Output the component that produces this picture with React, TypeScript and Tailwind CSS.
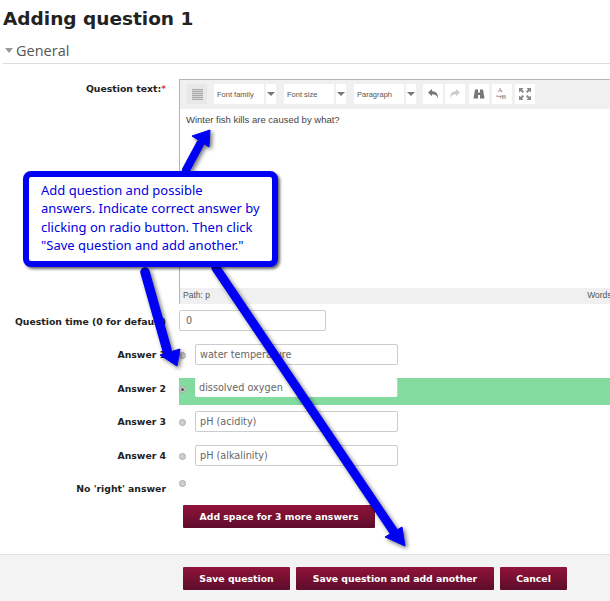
const V = '"DejaVu Sans", Verdana, sans-serif';

function Caret() {
  return <span className="w-0 h-0 border-l-[4px] border-r-[4px] border-t-[4px] border-l-transparent border-r-transparent border-t-[#777]" />;
}

function Select({ label, first = false }: { label: string; first?: boolean }) {
  return (
    <div className={`flex gap-[2px] h-[20px] ${first ? "" : "ml-[8px]"}`}>
      <div className="w-[50px] bg-white pl-[3px] text-[7.5px] leading-[21px] text-[#555] font-['Liberation_Sans',sans-serif]">{label}</div>
      <div className="w-[10px] bg-white flex items-center justify-center"><Caret /></div>
    </div>
  );
}

function ToolBtn({ children, className = "" }: { children: React.ReactNode; className?: string }) {
  return <div className={`w-[20px] h-[20px] bg-white flex items-center justify-center ${className}`}>{children}</div>;
}

function Radio({ checked = false }: { checked?: boolean }) {
  return (
    <span className="block w-[7px] h-[7px] rounded-full bg-[#d0d0d0] border border-[#aaa]">
      {checked && <span className="block m-[1px] w-[3px] h-[3px] rounded-full bg-[#555]" />}
    </span>
  );
}

function Label({ children, req }: { children: React.ReactNode; req?: boolean }) {
  return (
    <div className="w-[166px] shrink-0 text-right font-bold text-[9.3px] text-[#222] whitespace-nowrap" style={{ fontFamily: V }}>
      {children}
      {req && <span className="text-[#e53e3e]">*</span>}
    </div>
  );
}

function Answer({ label, value, className = "", checked, inputClass = "h-[21px] border border-[#ccc]" }: { label: string; value: string; className?: string; checked?: boolean; inputClass?: string }) {
  return (
    <div className="flex items-start">
      <div className="pt-[4px]"><Label>{label}</Label></div>
      <div className={`ml-[13px] flex-1 flex items-start ${className}`}>
        <div className="w-[16px] pt-[8px]"><Radio checked={checked} /></div>
        <div className={`w-[203px] rounded-[2px] bg-white pl-[4px] text-[9.7px] leading-[20px] text-[#666] ${inputClass}`} style={{ fontFamily: V }}>{value}</div>
      </div>
    </div>
  );
}

function Btn({ children, w }: { children: React.ReactNode; w: string }) {
  return (
    <div className={`${w} h-[23px] flex items-center justify-center rounded-[1px] bg-gradient-to-b from-[#911339] to-[#5e0c2b] text-white font-bold text-[9.3px] whitespace-nowrap`} style={{ fontFamily: V }}>
      {children}
    </div>
  );
}

export default function App() {
  return (
    <div className="relative w-[610px] h-[601px] overflow-hidden bg-white">
      <h2 className="pl-[3px] pt-[7px] text-[18.5px] leading-[24px] font-bold text-[#222]" style={{ fontFamily: V }}>Adding question 1</h2>

      <div className="mt-[10px] ml-[3px] h-[23px] border-b border-[#ddd] flex items-start">
        <span className="mt-[7px] ml-[2px] w-0 h-0 border-l-[4px] border-r-[4px] border-t-[5px] border-l-transparent border-r-transparent border-t-[#999]" />
        <span className="ml-[3px] mt-[1px] text-[14.500px] leading-[18px] text-[#555] font-['Open_Sans',sans-serif]">General</span>
      </div>

      <div className="mt-[15px] flex items-start">
        <div className="pt-[3px]"><Label req>Question text:</Label></div>
        <div className="ml-[13px] w-[445px] h-[225px] shrink-0 flex flex-col border-l border-t border-[#b5b5b5]">
          <div className="h-[29px] bg-[#f0f0f0] flex items-start pt-[4px] pl-[7px]">
            <div className="w-[20px] h-[20px] flex items-center justify-center bg-[#e8e8e8] mr-[7px]">
              <span className="w-[11px] h-[11px] bg-[repeating-linear-gradient(0deg,#aaa_0,#aaa_1px,#d5d5d5_1px,#d5d5d5_2px)]" />
            </div>
            <Select first label="Font family" />
            <Select label="Font size" />
            <Select label="Paragraph" />
            <ToolBtn className="ml-[7px]">
              <svg width="12" height="12" viewBox="0 0 12 12"><path d="M1 4.500 5 1v2.200c4 0 6 2.400 6 7.300-1-3-2.600-4.200-6-4.200V8.200z" fill="#777" /></svg>
            </ToolBtn>
            <ToolBtn className="ml-[2px]">
              <svg width="12" height="12" viewBox="0 0 12 12"><path d="M11 4.500 7 1v2.200c-4 0-6 2.400-6 7.300 1-3 2.600-4.200 6-4.200v1.900z" fill="#ccc" /></svg>
            </ToolBtn>
            <ToolBtn className="ml-[4px]">
              <svg width="12" height="12" viewBox="0 0 12 12"><path d="M2 1.500h3v3h2v-3h3l1.500 9H7V7H5v3.500H.5z" fill="#777" /></svg>
            </ToolBtn>
            <ToolBtn className="ml-[3px]">
              <div className="flex flex-col items-start w-[13px] text-[7px] leading-[7px] text-[#777] font-['Liberation_Serif',serif]">
                <span className="pl-[2px]">A</span>
                <span>↪B</span>
              </div>
            </ToolBtn>
            <ToolBtn className="ml-[3px]">
              <svg width="12" height="12" viewBox="0 0 12 12" fill="#888"><path d="M0 0h4.500L3 1.500 5 3.500 3.500 5 1.500 3 0 4.500zM12 0v4.500L10.500 3 8.500 5 7 3.500 9 1.500 7.500 0zM0 12V7.500L1.500 9 3.500 7 5 8.500 3 10.500 4.500 12zM12 12H7.500L9 10.500 7 8.500 8.500 7 10.500 9 12 7.500z" /></svg>
            </ToolBtn>
          </div>
          <div className="flex-1 bg-white pl-[6px] pt-[5px] text-[9.500px] leading-[12px] text-[#444] font-['Liberation_Sans',sans-serif] whitespace-nowrap">
            Winter fish kills are caused by what?
          </div>
          <div className="h-[16px] bg-[#f0f0f0] flex justify-between px-[3px] text-[8.500px] leading-[15px] text-[#555] font-['Liberation_Sans',sans-serif]">
            <span>Path: p</span>
            <span className="ml-auto">Words: 7</span>
          </div>
        </div>
      </div>

      <div className="mt-[6px] flex items-start">
        <div className="pt-[5px]"><Label>Question time (0 for default)</Label></div>
        <div className="ml-[13px] w-[147px] h-[21px] rounded-[2px] border border-[#ccc] bg-white pl-[6px] text-[9.700px] leading-[20px] text-[#666]" style={{ fontFamily: V }}>0</div>
      </div>

      <div className="mt-[13px] flex flex-col">
        <div className="h-[21px]"><Answer label="Answer 1" value="water temperature" /></div>
        <div className="mt-[13px] h-[27px]">
          <Answer label="Answer 2" value="dissolved oxygen" checked className="h-[27px] bg-[#84dba0]" inputClass="h-[19px] border-r border-r-[#ccc]" />
        </div>
        <div className="mt-[6px] h-[21px]"><Answer label="Answer 3" value="pH (acidity)" /></div>
        <div className="mt-[13px] h-[21px]"><Answer label="Answer 4" value="pH (alkalinity)" /></div>
      </div>

      <div className="mt-[12px] flex items-start h-[14px]">
        <div className="pt-[4px]"><Label>No 'right' answer</Label></div>
        <div className="ml-[13px] pt-[2px]"><Radio /></div>
      </div>

      <div className="mt-[13px] ml-[183px]"><Btn w="w-[192px]">Add space for 3 more answers</Btn></div>

      <div className="mt-[26px] h-[47px] bg-[#f3f3f3] border-t border-[#e2e2e2] pt-[12px] pl-[183px] flex gap-[6px]">
        <Btn w="w-[107px]">Save question</Btn>
        <Btn w="w-[198px]">Save question and add another</Btn>
        <Btn w="w-[67px]">Cancel</Btn>
      </div>

      <svg className="absolute inset-0 pointer-events-none" width="610" height="601" viewBox="0 0 610 601" style={{ filter: "drop-shadow(2px 2px 2px rgba(0,0,0,0.55))" }}>
        <g fill="#0000f5" stroke="#0000f5" strokeLinejoin="round">
          <path d="M186 170 200 144" strokeWidth="8" strokeLinecap="round" fill="none" />
          <path d="M192 136 210 130 209 147z" strokeWidth="1" />
          <path d="M145 272 167 350" strokeWidth="9.500" strokeLinecap="round" fill="none" />
          <path d="M160 355 180 349 177 366z" strokeWidth="1" />
          <path d="M216 268 394 532" strokeWidth="9" strokeLinecap="round" fill="none" />
          <path d="M385 537 402 527 405 546z" strokeWidth="1" />
        </g>
      </svg>

      <div className="absolute left-[23px] top-[171px] w-[255px] h-[96px] rounded-[8px] border-[6px] border-[#0000f5] bg-white pl-[12px] pt-[4px] text-[13px] leading-[18.400px] text-[#0000e0] shadow-[2px_2px_3px_rgba(0,0,0,0.6)] font-['Noto_Sans',sans-serif] whitespace-nowrap">
        Add question and possible<br />
        answers. Indicate correct answer by<br />
        clicking on radio button. Then click<br />
        "Save question and add another."
      </div>
    </div>
  );
}
